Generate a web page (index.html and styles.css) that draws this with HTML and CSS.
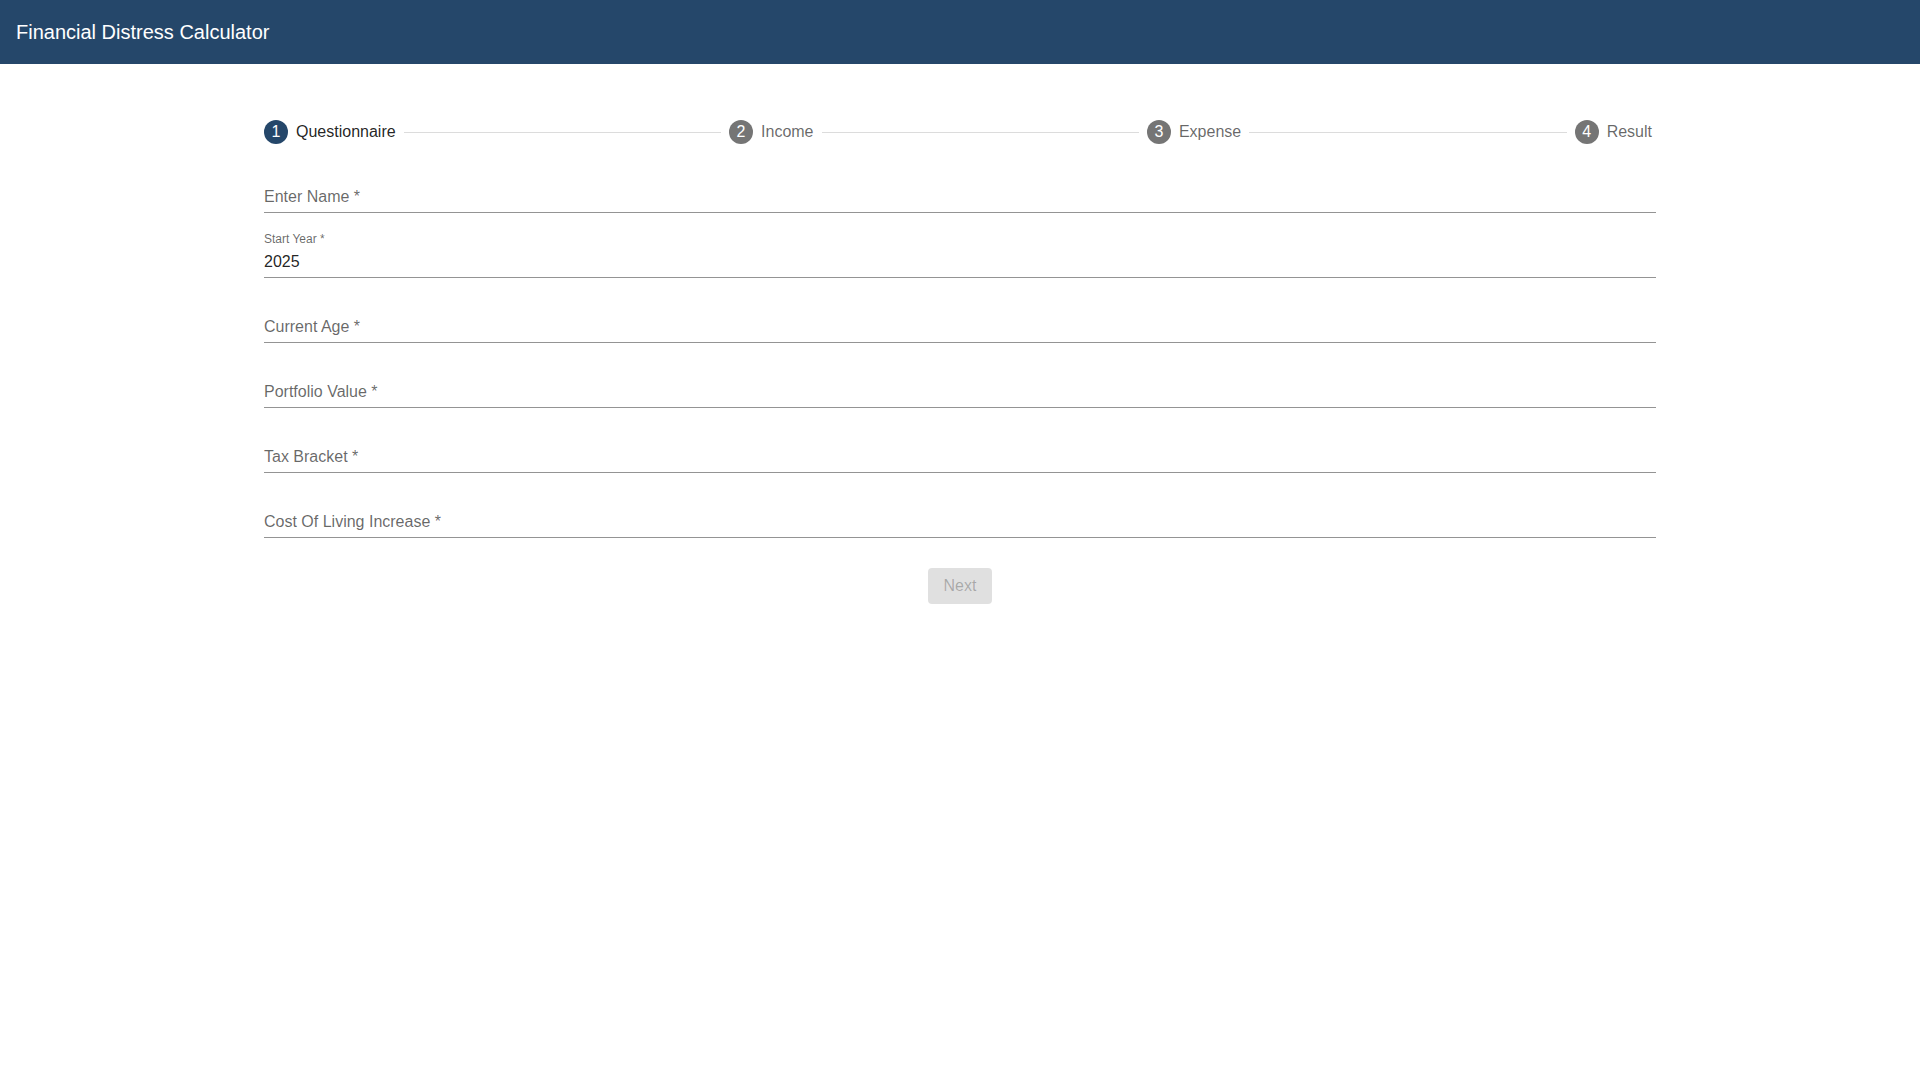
FILE: index.html
```html
<!DOCTYPE html>
<html lang="en">
<head>
<meta charset="utf-8">
<title>Financial Distress Calculator</title>
<link rel="stylesheet" href="styles.css">
</head>
<body>
<header class="appbar">
  <h1 class="appbar-title">Financial Distress Calculator</h1>
</header>
<main class="page">
  <div class="stepper">
    <div class="step step-active">
      <span class="step-icon">1</span>
      <span class="step-label">Questionnaire</span>
    </div>
    <div class="connector"></div>
    <div class="step">
      <span class="step-icon">2</span>
      <span class="step-label">Income</span>
    </div>
    <div class="connector"></div>
    <div class="step">
      <span class="step-icon">3</span>
      <span class="step-label">Expense</span>
    </div>
    <div class="connector"></div>
    <div class="step step-last">
      <span class="step-icon">4</span>
      <span class="step-label">Result</span>
    </div>
  </div>

  <form class="form">
    <div class="field">
      <div class="field-label-space"></div>
      <div class="field-input"><span class="placeholder">Enter Name *</span></div>
    </div>
    <div class="field">
      <div class="field-label-space"><span class="shrunk-label">Start Year *</span></div>
      <div class="field-input"><span class="value">2025</span></div>
    </div>
    <div class="field">
      <div class="field-label-space"></div>
      <div class="field-input"><span class="placeholder">Current Age *</span></div>
    </div>
    <div class="field">
      <div class="field-label-space"></div>
      <div class="field-input"><span class="placeholder">Portfolio Value *</span></div>
    </div>
    <div class="field">
      <div class="field-label-space"></div>
      <div class="field-input"><span class="placeholder">Tax Bracket *</span></div>
    </div>
    <div class="field">
      <div class="field-label-space"></div>
      <div class="field-input"><span class="placeholder">Cost Of Living Increase *</span></div>
    </div>
    <div class="actions">
      <button type="button" class="btn-next" disabled>Next</button>
    </div>
  </form>
</main>
</body>
</html>
```

FILE: styles.css
```css
* {
  box-sizing: border-box;
}

html, body {
  margin: 0;
  padding: 0;
  background: #ffffff;
  font-family: "Liberation Sans", Arial, Helvetica, sans-serif;
  color: rgba(0, 0, 0, 0.87);
}

.appbar {
  height: 64px;
  background: #25476a;
  display: flex;
  align-items: center;
  padding: 0 16px;
}

.appbar-title {
  margin: 0;
  font-size: 20px;
  font-weight: 400;
  line-height: 32px;
  color: #ffffff;
}

.page {
  width: 1392px;
  margin: 0 auto;
  padding-top: 56px;
}

.stepper {
  display: flex;
  align-items: center;
  height: 24px;
}

.step {
  display: flex;
  align-items: center;
  padding: 0 8px;
  flex: 0 0 auto;
}

.step:first-child {
  padding-left: 0;
}

.step-last {
  padding-right: 4px;
}

.step-icon {
  width: 24px;
  height: 24px;
  border-radius: 50%;
  background: #757575;
  color: #ffffff;
  font-size: 16px;
  line-height: 24px;
  text-align: center;
  flex: 0 0 24px;
}

.step-active .step-icon {
  background: #25476a;
}

.step-label {
  padding-left: 8px;
  font-size: 16px;
  line-height: 24px;
  color: rgba(0, 0, 0, 0.6);
}

.step-active .step-label {
  color: rgba(0, 0, 0, 0.87);
}

.connector {
  flex: 1 1 auto;
  border-top: 1px solid #dcdcdc;
  height: 0;
}

.form {
  margin-top: 21px;
  display: flex;
  flex-direction: column;
  gap: 17px;
}

.field {
  height: 48px;
  display: flex;
  flex-direction: column;
}

.field-label-space {
  height: 16px;
  font-size: 12px;
  line-height: 16px;
}

.shrunk-label {
  color: rgba(0, 0, 0, 0.6);
  font-size: 12px;
  position: relative;
  top: 1px;
}

.field-input {
  height: 32px;
  padding: 4px 0 5px;
  border-bottom: 1px solid rgba(0, 0, 0, 0.42);
  font-size: 16px;
  line-height: 23px;
}

.placeholder {
  color: rgba(0, 0, 0, 0.6);
}

.value {
  color: rgba(0, 0, 0, 0.87);
}

.actions {
  display: flex;
  justify-content: center;
  margin-top: 13px;
}

.btn-next {
  font-family: "Liberation Sans", Arial, Helvetica, sans-serif;
  font-size: 16px;
  line-height: 24px;
  font-weight: 400;
  padding: 6px 16px;
  min-width: 64px;
  border: 0;
  border-radius: 4px;
  background: rgba(0, 0, 0, 0.12);
  color: rgba(0, 0, 0, 0.26);
  cursor: default;
}
```
